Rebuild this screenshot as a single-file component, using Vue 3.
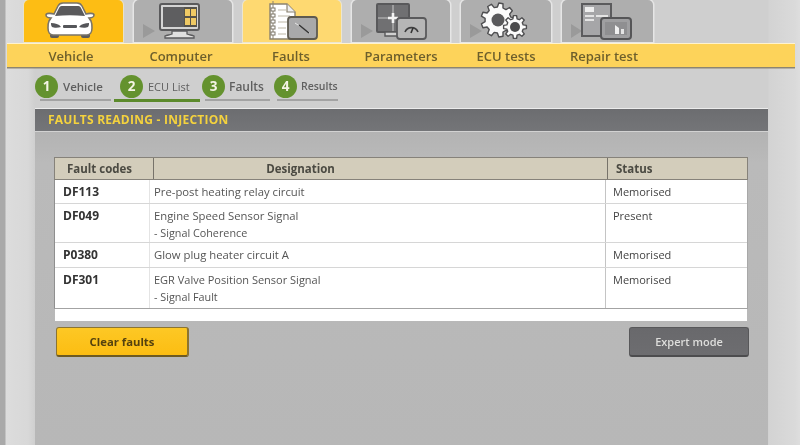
<script setup>
function gear(cx, cy, ro, ri, teeth) {
  const pts = []
  const step = (Math.PI * 2) / teeth
  for (let i = 0; i < teeth; i++) {
    const a = i * step
    const list = [
      [ri, a - step * 0.32],
      [ro, a - step * 0.18],
      [ro, a + step * 0.18],
      [ri, a + step * 0.32]
    ]
    for (const [r, t] of list) {
      pts.push((cx + r * Math.cos(t)).toFixed(1) + ' ' + (cy + r * Math.sin(t)).toFixed(1))
    }
  }
  return 'M' + pts.join('L') + 'Z'
}
const bigGear = gear(37, 20, 17, 13, 9)
const smallGear = gear(54, 27, 11.5, 8.5, 8)

const labels = ['Vehicle', 'Computer', 'Faults', 'Parameters', 'ECU tests', 'Repair test']
const steps = [
  { n: 1, label: 'Vehicle', cls: 's1' },
  { n: 2, label: 'ECU List', cls: 's2' },
  { n: 3, label: 'Faults', cls: 's3' },
  { n: 4, label: 'Results', cls: 's4' }
]
const rows = [
  { code: 'DF113', lines: ['Pre-post heating relay circuit'], status: 'Memorised' },
  { code: 'DF049', lines: ['Engine Speed Sensor Signal', '- Signal Coherence'], status: 'Present' },
  { code: 'P0380', lines: ['Glow plug heater circuit A'], status: 'Memorised' },
  { code: 'DF301', lines: ['EGR Valve Position Sensor Signal', '- Signal Fault'], status: 'Memorised' }
]
</script>

<template>
  <div class="app">
    <div class="tabs">
      <div class="tab tab-amber w99">
        <svg width="99" height="42" viewBox="0 0 99 42">
          <rect x="26" y="31" width="9" height="7" rx="2" fill="#5c5c5c" />
          <rect x="57" y="31" width="9" height="7" rx="2" fill="#5c5c5c" />
          <path d="M22 15c0-2 5-2 8-1l4-8c1-2 3-3 5-3h14c2 0 4 1 5 3l4 8c3-1 8-1 8 1 0 2-3 3-5 3l2 3c1 2 1 4 1 7 0 4-2 7-5 7H29c-3 0-5-3-5-7 0-3 0-5 1-7l2-3c-2 0-5-1-5-3Z" fill="#fff" stroke="#7a7468" stroke-width="1.6" />
          <path d="M31 16l4-8c1-2 2-2 4-2h14c2 0 3 0 4 2l4 8c-10-1-20-1-30 0Z" fill="#5a5a5c" />
          <path d="M27 23c4 0 8 1 10 4-3 1-7 1-9 0-1-1-1-3-1-4Z" fill="#55565a" />
          <path d="M65 23c-4 0-8 1-10 4 3 1 7 1 9 0 1-1 1-3 1-4Z" fill="#55565a" />
          <rect x="39" y="25" width="14" height="3" rx="1" fill="#55565a" />
        </svg>
      </div>
      <div class="tab tab-gray w98">
        <svg width="98" height="42" viewBox="0 0 98 42">
          <path d="M9 24l12 7-12 7Z" fill="#9a9a9a" />
          <rect x="26" y="4" width="39" height="26" rx="2" fill="#d4d4d4" stroke="#5a5a5c" stroke-width="2" />
          <rect x="29" y="7" width="21" height="20" fill="#5e5e60" />
          <rect x="50" y="7" width="13" height="20" fill="#55524a" />
          <rect x="51" y="9" width="5" height="7" fill="#efc964" />
          <rect x="57" y="9" width="5" height="7" fill="#efc964" />
          <rect x="51" y="18" width="5" height="7" fill="#efc964" />
          <rect x="57" y="18" width="5" height="7" fill="#efc964" />
          <path d="M38 31h15v3c2 1 5 1 7 2v2H31v-2c2-1 5-1 7-2Z" fill="#e0e0e0" stroke="#5a5a5c" stroke-width="1.3" />
        </svg>
      </div>
      <div class="tab tab-pale w98">
        <svg width="98" height="42" viewBox="0 0 98 42">
          <path d="M27 4h17l8 8v27H27Z" fill="#fff" stroke="#8a8270" stroke-width="1.4" />
          <path d="M44 4v8h8" fill="#eee" stroke="#8a8270" stroke-width="1.2" />
          <path d="M30 1v38" stroke="#8a8270" stroke-width="1" />
          <g fill="#fff" stroke="#7d7668" stroke-width="1">
            <rect x="28" y="8" width="4" height="3" />
            <rect x="28" y="14" width="4" height="3" />
            <rect x="28" y="20" width="4" height="3" />
            <rect x="28" y="26" width="4" height="3" />
            <rect x="28" y="32" width="4" height="3" />
          </g>
          <g stroke="#bdb7a6" stroke-width="1">
            <path d="M35 10h9M35 16h12M35 22h12M35 28h8M35 34h8" />
          </g>
          <rect x="45" y="17" width="29" height="22" rx="3" fill="#a9a9aa" stroke="#5e5a50" stroke-width="1.8" />
          <path d="M52 23l15 10" stroke="#e8e8e8" stroke-width="1" />
          <path d="M56 25l10 8" stroke="#333" stroke-width="1.6" />
        </svg>
      </div>
      <div class="tab tab-gray w98">
        <svg width="98" height="42" viewBox="0 0 98 42">
          <path d="M9 24l12 7-12 7Z" fill="#9a9a9a" />
          <rect x="25" y="4" width="32" height="28" rx="1" fill="#707072" stroke="#59595b" stroke-width="2" />
          <path d="M26 18h30M41 5v26" stroke="#c4c4c4" stroke-width="1.1" />
          <path d="M41 13v10M36 18h10" stroke="#f4f4f4" stroke-width="2.6" />
          <path d="M33 32h14v4H33Z" fill="#d0d0d0" stroke="#59595b" stroke-width="1.4" />
          <rect x="45" y="18" width="29" height="21" rx="3" fill="#b6b6b6" stroke="#5a5a5c" stroke-width="1.8" />
          <path d="M53 32a7 7 0 0 1 13 0" fill="none" stroke="#3f3f40" stroke-width="1.6" />
          <path d="M59 33l2-5" stroke="#333" stroke-width="1.6" />
        </svg>
      </div>
      <div class="tab tab-gray w90">
        <svg width="90" height="42" viewBox="0 0 90 42">
          <path d="M9 24l12 7-12 7Z" fill="#9a9a9a" />
          <path :d="bigGear" fill="#fbfbfb" stroke="#4e4e50" stroke-width="1.4" stroke-linejoin="round" />
          <circle cx="37" cy="20" r="6.5" fill="#59595b" />
          <path :d="smallGear" fill="#fbfbfb" stroke="#4e4e50" stroke-width="1.4" stroke-linejoin="round" />
          <circle cx="54" cy="27" r="5" fill="#4a4a4c" />
        </svg>
      </div>
      <div class="tab tab-gray w91">
        <svg width="91" height="42" viewBox="0 0 91 42">
          <path d="M9 24l11 7-11 7Z" fill="#9a9a9a" />
          <rect x="20" y="4" width="29" height="32" fill="#a6a6a8" stroke="#5b5b5d" stroke-width="2" />
          <rect x="23" y="7" width="9" height="5" fill="#eee" />
          <rect x="23" y="15" width="9" height="2" fill="#e4e4e4" />
          <rect x="34" y="15" width="12" height="2" fill="#e4e4e4" />
          <rect x="23" y="19" width="9" height="2" fill="#e4e4e4" />
          <rect x="39" y="18" width="30" height="21" rx="3" fill="#9f9fa1" stroke="#555557" stroke-width="2" />
          <rect x="43" y="22" width="22" height="13" fill="#8f8f91" />
          <path d="M53 25l4 3v6h-4Z" fill="#f1f1f1" />
          <path d="M59 29h3v5h-3Z" fill="#e4e4e4" />
        </svg>
      </div>
    </div>

    <div class="menu">
      <span v-for="l in labels" :key="l">{{ l }}</span>
    </div>

    <div class="steps">
      <div v-for="s in steps" :key="s.n" class="step" :class="s.cls">
        <div class="step-row">
          <span class="num">{{ s.n }}</span>
          <span class="step-label">{{ s.label }}</span>
        </div>
        <div class="line"></div>
      </div>
    </div>

    <section class="panel">
      <h2 class="title">FAULTS READING - INJECTION</h2>
      <div class="body">
        <div class="table">
          <div class="thead">
            <div class="th first">Fault codes</div>
            <div class="th mid">Designation</div>
            <div class="th last">Status</div>
          </div>
          <div class="tbody">
            <div v-for="r in rows" :key="r.code" class="tr">
              <div class="td code">{{ r.code }}</div>
              <div class="td desc"><div v-for="l in r.lines" :key="l">{{ l }}</div></div>
              <div class="td stat">{{ r.status }}</div>
            </div>
          </div>
          <div class="foot"></div>
        </div>
        <div class="actions">
          <button class="btn amber">Clear faults</button>
          <button class="btn dark">Expert mode</button>
        </div>
      </div>
    </section>
  </div>
</template>

<style>
html, body { margin: 0; padding: 0; background: #d9d9d9; overflow: hidden; }
</style>

<style scoped>
.app {
  width: 800px;
  height: 445px;
  box-sizing: border-box;
  overflow: hidden;
  background: linear-gradient(90deg, #a9a9a9 0, #a9a9a9 5px, #dcdcdc 6px, #d8d8d8 28px, #cfcfcf 35px, #cfcfcf 768px, #d3d3d3 769px, #dadada 795px, #dedede 800px);
  font-family: "Open Sans", "Noto Sans", sans-serif;
  display: flex;
  flex-direction: column;
  filter: blur(0.4px);
}
.tabs {
  display: flex;
  gap: 11px;
  height: 42px;
  padding-left: 24px;
}
.tab { height: 42px; border-top-left-radius: 5px; border-top-right-radius: 5px; overflow: hidden; }
.tab svg { display: block; }
.w99 { width: 99px; }
.w98 { width: 98px; }
.w90 { width: 90px; }
.w91 { width: 91px; }
.tab-amber { background: #fdbd14; box-shadow: 0 0 0 1px #e9e2c8; }
.tab-pale { background: #fed971; box-shadow: 0 0 0 1px #ece6d0; }
.tab-gray { background: #aeaeae; box-shadow: 0 0 0 1.5px #e6e6e6; }

.menu {
  margin-top: 1px;
  margin-left: 7px;
  width: 788px;
  height: 24px;
  box-sizing: border-box;
  border-top: 1px solid #fff3cf;
  padding-left: 9px;
  background: #fdd35a;
  box-shadow: 0 1.5px 0 #8d8570;
  display: grid;
  grid-template-columns: 110px 110px 110px 110px 100px 96px;
  align-items: center;
  font-size: 13px;
  font-weight: 600;
  color: #6d5f2c;
  text-align: center;
  white-space: nowrap;
}

.steps {
  display: flex;
  height: 34px;
  margin-top: 7px;
  padding-left: 35px;
}
.step { display: flex; flex-direction: column; }
.step-row { display: flex; align-items: center; height: 24px; gap: 5px; }
.num {
  width: 23px;
  height: 23px;
  border-radius: 50%;
  background: #64922e;
  color: #f4f4e4;
  font-size: 13.5px;
  font-weight: 700;
  display: flex;
  align-items: center;
  justify-content: center;
  flex: none;
}
.step-label { font-size: 11.5px; font-weight: 600; color: #5f5f5f; white-space: nowrap; }
.line { height: 2px; margin-top: 1px; background: #a3a3a3; }
.s1 { width: 76px; }
.s1 .line { margin-left: 5px; width: 71px; }
.s2 { width: 82px; margin-left: 9px; }
.s2 .step-label { font-weight: 400; font-size: 11px; }
.s2 .line { margin-left: -6px; width: 86px; height: 3px; background: #5c8a2c; }
.s3 { width: 72px; }
.s3 .step-label { font-size: 12px; }
.s3 .line { margin-left: 3px; width: 65px; }
.s4 { width: 64px; }
.s4 .step-label { font-size: 10.5px; }
.s4 .line { margin-left: 3px; width: 61px; }
.s3 .step-row, .s4 .step-row { gap: 4px; }

.panel {
  margin-left: 35px;
  width: 733px;
  flex: 1;
  display: flex;
  flex-direction: column;
  border-top: 1px solid #ececec;
  min-height: 0;
}
.title {
  margin: 0;
  height: 22px;
  line-height: 22px;
  padding-left: 13px;
  background: linear-gradient(#6c6d70, #747578);
  border-bottom: 1px solid #d2d2d2;
  color: #f4d23e;
  font-size: 12px;
  font-weight: 700;
  letter-spacing: 0.25px;
  white-space: nowrap;
}
.body {
  flex: 1;
  padding: 25px 20px 0 19px;
  background: linear-gradient(#b3b3b3, #bababa 10%, #b7b7b7);
}
.table { width: 694px; }
.thead {
  display: grid;
  grid-template-columns: 98px 455px 141px;
  height: 23px;
  box-sizing: border-box;
  background: #d3cdbb;
  border: 1.5px solid #86827a;
  border-width: 1.5px 1px 1.5px 1.5px;
  font-size: 11.5px;
  font-weight: 700;
  color: #4b4a42;
}
.th { display: flex; align-items: center; justify-content: center; }
.first { padding-right: 9px; }
.mid { border-left: 1.5px solid #77736a; border-right: 1.5px solid #77736a; padding-right: 160px; }
.last { justify-content: flex-start; padding-left: 8px; }
.tbody {
  background: #fff;
  border-left: 1.5px solid #8f8f8f;
  border-right: 1px solid #a8a8a8;
  border-bottom: 1.5px solid #a3a3a3;
}
.tr {
  display: grid;
  grid-template-columns: 94px 456px 1fr;
  border-bottom: 1px solid #d6d6d6;
  box-sizing: border-box;
}
.tr:nth-child(1) { height: 24px; }
.tr:nth-child(2) { height: 39px; }
.tr:nth-child(3) { height: 25px; }
.tr:nth-child(4) { height: 40px; border-bottom: 0; }
.td {
  padding: 3px 0 0 8px;
  line-height: 17px;
  font-size: 11px;
  color: #555;
  box-sizing: border-box;
  white-space: nowrap;
}
.code { font-weight: 700; font-size: 12px; color: #333; }
.desc { padding-left: 4px; border-left: 1px solid #e4e4e4; font-size: 11.3px; }
.desc > div + div { font-size: 10.8px; }
.tr:nth-child(4) .desc { font-size: 11px; }
.stat { padding-left: 7px; border-left: 1px solid #c4c4c4; color: #444; }
.foot { height: 12px; margin: 0 1px; background: #fff; }
.actions {
  display: flex;
  justify-content: space-between;
  margin: 6px -1px 0 2px;
}
.btn {
  height: 30px;
  border-radius: 3px;
  font-family: inherit;
  font-size: 11.3px;
  font-weight: 700;
  padding: 0;
  cursor: pointer;
}
.amber {
  width: 133px;
  background: linear-gradient(#fdc825, #fcbd12);
  border: 1px solid #8c7430;
  border-bottom: 2px solid #6d5a22;
  border-right-width: 2px;
  color: #55420f;
}
.dark {
  width: 120px;
  background: linear-gradient(#69696c, #6d6d70);
  border: 1px solid #58585a;
  border-bottom: 2px solid #4c4c4e;
  color: #dededc;
  font-size: 11px;
  font-weight: 600;
}
</style>
